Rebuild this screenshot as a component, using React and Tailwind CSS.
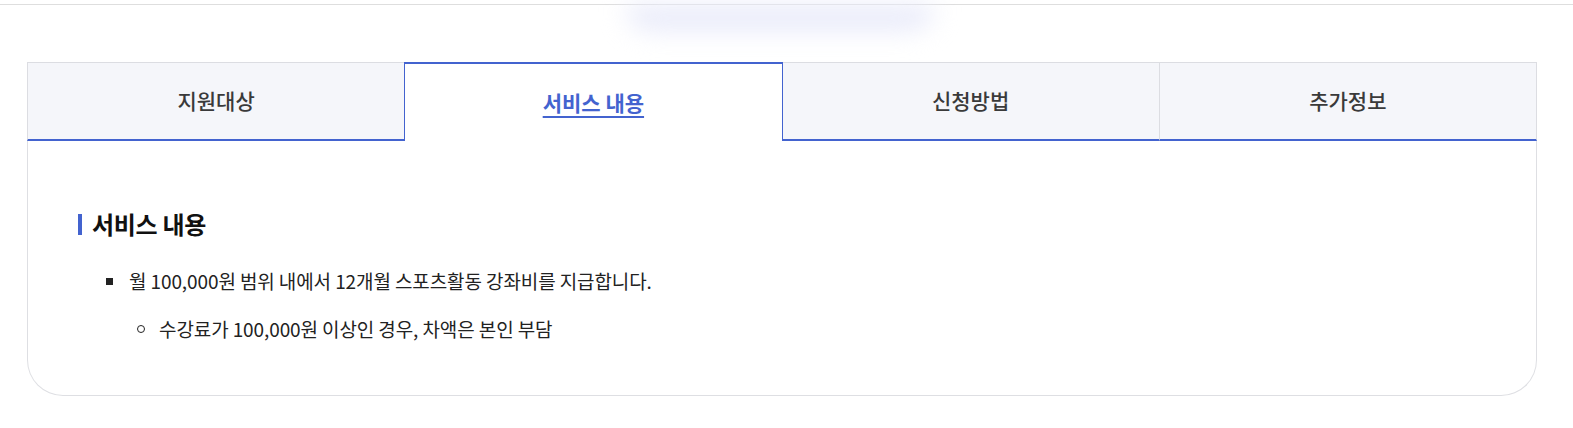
import { useState } from 'react';

const tabs = ['지원대상', '서비스 내용', '신청방법', '추가정보'];

export default function App() {
  const [active, setActive] = useState(1);

  return (
    <div
      className="min-h-screen bg-white text-[#222]"
      style={{ fontFamily: '"Noto Sans CJK KR", "Noto Sans", sans-serif' }}
    >
      {/* 상단 헤더 라인 */}
      <div className="relative h-[5px] border-b border-[#dedede]">
        <div className="absolute left-[625px] top-[5px] h-[26px] w-[310px] rounded-b-[40px] bg-[#e9ebfa] blur-md" />
      </div>

      <div className="ml-[27px] mt-[57px] w-[1510px]">
        {/* 탭 */}
        <div className="flex h-[79px]">
          {tabs.map((tab, i) => {
            const on = i === active;
            return (
              <button
                key={tab}
                onClick={() => setActive(i)}
                className={
                  on
                    ? 'flex-1 flex items-center justify-center bg-white border-t-2 border-x border-[#4363cf] text-[21px] font-bold text-[#4363cf] underline underline-offset-[5px] decoration-[2px]'
                    : 'flex-1 flex items-center justify-center bg-[#f5f6fa] border-t border-[#dcdde2] border-b-2 border-b-[#4363cf] text-[21px] font-medium text-[#3a3a3a] ' +
                      (i === 0 ? 'border-l ' : '') +
                      (i === tabs.length - 1 ? 'border-r ' : '') +
                      (i === 3 ? 'border-l border-l-[#dcdde2]' : '')
                }
              >
                {tab}
              </button>
            );
          })}
        </div>

        {/* 내용 */}
        <div className="h-[255px] border-x border-b border-[#dedfe3] rounded-b-[36px] pl-[50px] pt-[67px]">
          <h3 className="flex items-center gap-[10px] text-[24px] font-bold text-[#111] tracking-[-0.3px] leading-[32px]">
            <span className="block h-[21px] w-[4px] bg-[#4363cf]" />
            서비스 내용
          </h3>
          <ul className="mt-[28px] pl-[28px] text-[19px] tracking-[-0.1px] text-[#222]">
            <li className="flex items-center leading-[26px]">
              <span className="mr-[16px] block h-[7px] w-[7px] bg-[#222]" />
              월 100,000원 범위 내에서 12개월 스포츠활동 강좌비를 지급합니다.
            </li>
            <li className="mt-[22px] ml-[31px] flex items-center leading-[26px]">
              <span className="mr-[14px] block h-[8px] w-[8px] rounded-full border border-[#222]" />
              수강료가 100,000원 이상인 경우, 차액은 본인 부담
            </li>
          </ul>
        </div>
      </div>
    </div>
  );
}
